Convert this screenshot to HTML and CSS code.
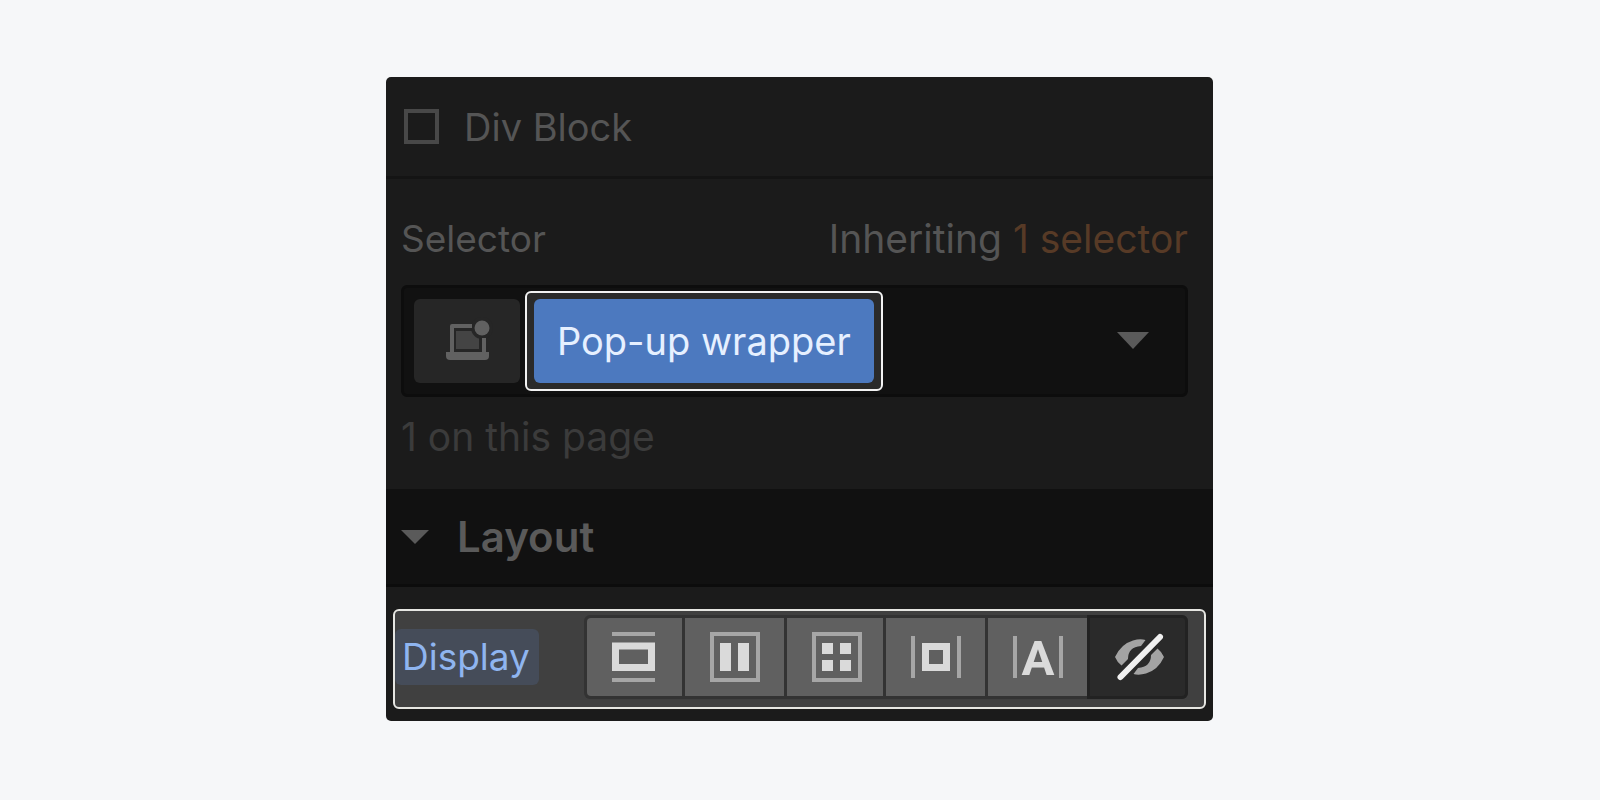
FILE: index.html
```html
<!DOCTYPE html>
<html lang="en">
<head>
  <meta charset="UTF-8" />
  <meta name="viewport" content="width=device-width, initial-scale=1.0" />
  <title>Style panel</title>
  <link rel="stylesheet" href="styles.css">
</head>
<body>

<main class="panel">
  <header class="element-name">
    <span class="element-icon"></span>
    <span>Div Block</span>
  </header>

  <section class="selector">
    <div class="selector-top">
      <span class="field-name">Selector</span>
      <span>Inheriting <a href="#inherited">1 selector</a></span>
    </div>

    <div class="selector-field">
      <button class="state-button" type="button" aria-label="Breakpoint">
        <svg width="43" height="43" viewBox="0 0 43 43">
          <path d="M10 11h23v18h-23z" fill="#444" />
          <circle cx="36" cy="8" r="11" fill="#262626" />
          <path d="M6 32V6h20" fill="none" stroke="#616161" stroke-width="4" stroke-linejoin="round" />
          <path d="M36 18h4v15h-4z" fill="#616161" />
          <path d="M0 32h43v4q0 4-4 4H4q-4 0-4-4z" fill="#616161" />
          <circle cx="36" cy="8" r="7.5" fill="#616161" />
        </svg>
      </button>
      <div class="highlight">
        <button class="class-tag" type="button">Pop-up wrapper</button>
      </div>
      <button class="open-list" type="button" aria-label="Show classes">
        <svg width="32" height="18" viewBox="0 0 32 18"><path d="M0 0h32L16 17z" fill="#5a5a5a" /></svg>
      </button>
    </div>

    <p class="count">1 on this page</p>
  </section>

  <button class="section-title" type="button" aria-expanded="true">
    <svg width="28" height="14" viewBox="0 0 28 14"><path d="M0 0h28L14 14z" fill="#5a5a5a" /></svg>
    Layout
  </button>

  <section class="layout">
    <div class="display-row">
      <span class="display-label field-name" id="display-label">Display</span>
      <div class="display-options" role="group" aria-labelledby="display-label">
        <button type="button" aria-label="Block">
          <svg width="50" height="50" viewBox="0 0 50 50">
            <path d="M2 0h43v4H2zM2 46h43v4H2z" fill="#a6a6a6" />
            <path d="M5.500 14h36v21.500h-36z" fill="none" stroke="#dadada" stroke-width="7" />
          </svg>
        </button>
        <button type="button" aria-label="Flex">
          <svg width="50" height="50" viewBox="0 0 50 50">
            <path d="M2 2h46v46H2z" fill="none" stroke="#a6a6a6" stroke-width="4" />
            <path d="M10 11h11v28H10zM28 11h11v28H28z" fill="#dadada" />
          </svg>
        </button>
        <button type="button" aria-label="Grid">
          <svg width="50" height="50" viewBox="0 0 50 50">
            <path d="M4 2h46v46H4z" fill="none" stroke="#a6a6a6" stroke-width="4" />
            <path d="M12 11h11v11H12zM30 11h11v11H30zM12 28h11v11H12zM30 28h11v11H30z" fill="#dadada" />
          </svg>
        </button>
        <button type="button" aria-label="Inline block">
          <svg width="50" height="50" viewBox="0 0 50 50">
            <path d="M0 4h4v42H0zM46 4h4v42h-4z" fill="#a6a6a6" />
            <path d="M14.500 14.500h21v21h-21z" fill="none" stroke="#dadada" stroke-width="7" />
          </svg>
        </button>
        <button type="button" aria-label="Inline">
          <svg width="50" height="50" viewBox="0 0 50 50">
            <path d="M0 4h4v42H0zM46 4h4v42h-4z" fill="#a6a6a6" />
            <text class="inline-letter" x="25" y="43" text-anchor="middle">A</text>
          </svg>
        </button>
        <button class="active" type="button" aria-label="None" aria-pressed="true">
          <svg width="50" height="50" viewBox="0 0 50 50">
            <g fill="#a3a3a3">
              <path id="lid" d="M32.500 8Q27 6.500 20 8.500Q8 12 2 25Q4 30 8.500 33.500L15 27Q15 15 28 14z" />
              <use href="#lid" transform="rotate(180 26.500 25)" />
            </g>
            <path d="M7.500 45L47 5" stroke="#f0f0f0" stroke-width="6" stroke-linecap="round" />
          </svg>
        </button>
      </div>
    </div>
  </section>
</main>

</body>
</html>
```

FILE: styles.css
```css
* {
  box-sizing: border-box;
}

body {
  margin: 0;
  padding: 77px 387px 80px 386px;
  background: #f6f7f9;
  color: #555;
  font-family: Inter, "Liberation Sans", sans-serif;
  font-size: 39px;
  line-height: 48px;
}

button {
  margin: 0;
  padding: 0;
  border: 0;
  background: none;
  color: inherit;
  font: inherit;
  cursor: pointer;
}

svg {
  display: block;
  overflow: visible;
}

.panel {
  overflow: hidden;
  border-radius: 5px;
  background: #1b1b1b;
}

.element-name {
  display: flex;
  align-items: center;
  gap: 25px;
  height: 102px;
  padding: 0 18px;
  border-bottom: 3px solid #141414;
  font-size: 38px;
}

.element-icon {
  width: 35px;
  height: 35px;
  border: 4px solid #484848;
}

.field-name {
  font-size: 37px;
}

/* selector */

.selector {
  padding: 36px 25px 28px 15px;
}

.selector-top {
  display: flex;
  justify-content: space-between;
  margin-bottom: 22px;
}

.selector-top a {
  color: #573a26;
  text-decoration: none;
}

.selector-field {
  display: flex;
  align-items: center;
  height: 112px;
  padding: 0 36px 0 10px;
  border: 3px solid #0d0d0d;
  border-radius: 6px;
  background: #111;
}

.state-button {
  display: flex;
  align-items: center;
  justify-content: center;
  width: 106px;
  height: 84px;
  border-radius: 6px;
  background: #262626;
}

.highlight {
  margin-left: 5px;
  padding: 6px 7px;
  border: 2px solid #f2f2f2;
  border-radius: 6px;
  background: #2a2a2a;
}

.class-tag {
  display: block;
  height: 84px;
  padding: 0 23px;
  border-radius: 6px;
  background: #4c79bf;
  color: #e6f0ff;
  font-size: 38px;
}

.open-list {
  margin-left: auto;
}

.count {
  margin: 16px 0 0;
  color: #3b3b3b;
}

/* layout */

.section-title {
  display: flex;
  align-items: center;
  gap: 28px;
  width: 100%;
  height: 98px;
  padding: 0 15px;
  border-bottom: 3px solid #0c0c0c;
  background: #111;
  color: #5a5a5a;
  font-size: 42px;
  font-weight: 600;
}

.layout {
  padding: 22px 7px 12px;
}

.display-row {
  display: flex;
  align-items: center;
  justify-content: space-between;
  height: 100px;
  padding: 0 16px 4px 0;
  border: 2px solid #e6e6e2;
  border-radius: 6px;
  background: #404040;
}

.display-label {
  padding: 4px 9px 4px 7px;
  border-radius: 6px;
  background: #454c59;
  color: #8fb5f0;
}

.display-options {
  display: grid;
  grid-template-columns: 95fr 99fr 96fr 99fr 99fr 98fr;
  gap: 3px;
  width: 604px;
  height: 84px;
  padding: 3px 0 3px 3px;
  border-radius: 6px;
  background: #333;
}

.display-options button {
  display: flex;
  align-items: center;
  justify-content: center;
  background: #606060;
}

.display-options button:first-child {
  border-radius: 4px 0 0 4px;
}

.display-options .active {
  margin: -3px 0 -3px -3px;
  border: 3px solid #222;
  border-radius: 0 6px 6px 0;
  background: #2a2a2a;
}

.inline-letter {
  fill: #dadada;
  font-family: Roboto, sans-serif;
  font-size: 49px;
  font-weight: 700;
}

@media (max-width: 1400px) {
  body {
    padding: 40px;
  }
}
```
